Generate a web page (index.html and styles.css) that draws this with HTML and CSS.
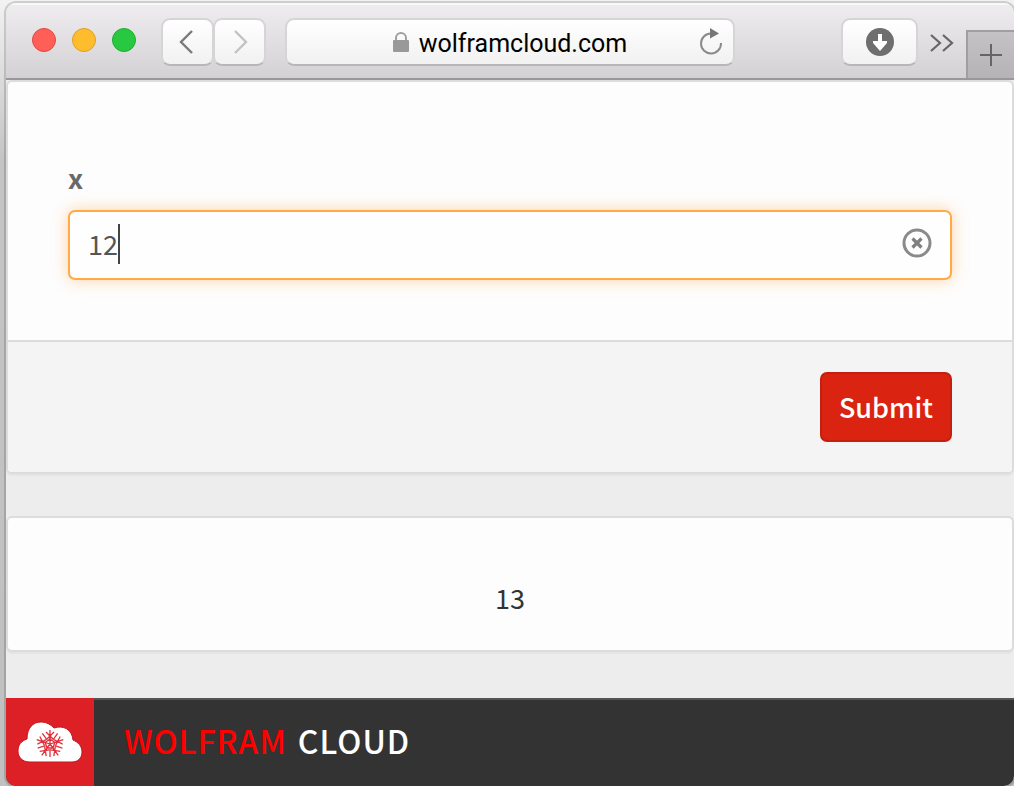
FILE: index.html
```html
<!DOCTYPE html>
<html lang="en">
  <head>
    <meta charset="UTF-8" />
    <meta name="viewport" content="width=device-width, initial-scale=1.0" />
    <title>wolframcloud.com</title>
    <link rel="stylesheet" href="styles.css">
  </head>
  <body>
    <div class="window">
      <!-- Browser toolbar -->
      <header class="toolbar">
        <div class="lights">
          <span class="light red"></span>
          <span class="light yellow"></span>
          <span class="light green"></span>
        </div>

        <div class="nav">
          <button class="tool" type="button" aria-label="Back">
            <svg width="20" height="28" viewBox="0 0 20 28"><path d="M14 3 3 14l11 11" fill="none" stroke="#7a7a7a" stroke-width="2.4" /></svg>
          </button>
          <button class="tool" type="button" aria-label="Forward">
            <svg width="20" height="28" viewBox="0 0 20 28"><path d="M5 3l11 11L5 25" fill="none" stroke="#c2c2c2" stroke-width="2.4" /></svg>
          </button>
        </div>

        <div class="address">
          <svg class="lock" width="16" height="22" viewBox="0 0 16 22">
            <path d="M3 10V7a5 5 0 0 1 10 0v3" fill="none" stroke="#a0a0a0" stroke-width="2" />
            <rect x="0" y="9" width="16" height="12" rx="1" fill="#999" />
          </svg>
          <span class="host">wolframcloud.com</span>
          <button class="reload" type="button" aria-label="Reload">
            <svg width="24" height="28" viewBox="0 0 24 28">
              <path d="M12 5.500A10 10 0 1 0 22 15" fill="none" stroke="#8a8a8a" stroke-width="2" />
              <path d="M11 0l9 5.500-9 5z" fill="#777" />
            </svg>
          </button>
        </div>

        <button class="tool download" type="button" aria-label="Downloads">
          <svg width="28" height="28" viewBox="0 0 28 28">
            <circle cx="14" cy="14" r="14" fill="#6e6e6e" />
            <path d="M12 6h4v7h5v2l-7 8-7-8v-2h5z" fill="#fff" />
          </svg>
        </button>
        <button class="more" type="button" aria-label="More">
          <svg width="24" height="20" viewBox="0 0 24 20"><path d="M1 2l9 8-9 8M13 2l9 8-9 8" fill="none" stroke="#666" stroke-width="2.200" /></svg>
        </button>
        <button class="new-tab" type="button" aria-label="New tab">
          <svg width="22" height="22" viewBox="0 0 22 22"><path d="M11 0v22M0 11h22" stroke="#656565" stroke-width="2" /></svg>
        </button>
      </header>

      <main>
        <!-- Input form -->
        <form class="card">
          <div class="fields">
            <label for="x">x</label>
            <div class="field">
              <input id="x" type="text" value="12" />
              <span class="caret"></span>
              <button class="clear" type="button" aria-label="Clear">
                <svg width="30" height="30" viewBox="0 0 30 30">
                  <circle cx="15" cy="15" r="13" fill="none" stroke="#8a8a8a" stroke-width="3" />
                  <path d="M10.500 10.500l9 9M19.500 10.500l-9 9" stroke="#808080" stroke-width="3.200" />
                </svg>
              </button>
            </div>
          </div>
          <div class="actions">
            <button class="submit" type="submit">Submit</button>
          </div>
        </form>

        <!-- Result -->
        <output class="card result" for="x">13</output>
      </main>

      <footer>
        <div class="logo">
          <svg width="66" height="42" viewBox="0 0 66 42">
            <path d="M13 41C5 41 1 36 1 30c0-6 3-10 9-12C10 7 16 1 24 1c6 0 10 3 13 6 9-3 18 1 19 12 5 2 9 6 9 12 0 6-4 10-10 10z" fill="#fff" stroke="#c5161d" stroke-width="1" />
            <g transform="translate(33 23)" fill="none" stroke="#e0303a" stroke-width="1.300">
              <g id="spikes">
                <path id="spike" d="M0-5v-9M-4-12l4 4 4-4M-3-5l3-3 3 3" />
                <use href="#spike" transform="rotate(72)" />
                <use href="#spike" transform="rotate(144)" />
                <use href="#spike" transform="rotate(216)" />
                <use href="#spike" transform="rotate(288)" />
              </g>
              <path d="M0 5v8M0 5l0 8" transform="rotate(0)" />
              <path d="M0 5v8" transform="rotate(72)" />
              <path d="M0 5v8" transform="rotate(144)" />
              <path d="M0 5v8" transform="rotate(216)" />
              <path d="M0 5v8" transform="rotate(288)" />
              <path d="M0-5l4.800 3.500L3 4h-6l-1.800-5.500zM0 0v-5M0 0l4.800-1.500M0 0l3 4M0 0l-3 4M0 0l-4.800-1.500" />
            </g>
          </svg>
        </div>
        <div class="brand"><span>WOLFRAM</span> CLOUD</div>
      </footer>
    </div>
  </body>
</html>
```
FILE: styles.css
```css
* {
  box-sizing: border-box;
}

body {
  margin: 0;
  padding: 3px 0 0 6px;
  min-height: 100vh;
  display: flex;
  overflow: hidden;
  background: linear-gradient(#f2f2f2, #c4c4c4 160px, #c0c0c0);
  font-family: "Noto Sans CJK SC", "Open Sans", sans-serif;
  font-size: 27px;
  line-height: 40px;
}

button {
  padding: 0;
  border: 0;
  background: none;
  font: inherit;
}

svg {
  display: block;
}

.window {
  flex: 1;
  display: flex;
  flex-direction: column;
  border-radius: 10px;
  overflow: hidden;
  background: #ededed;
  box-shadow: 0 0 0 2px rgba(0, 0, 0, 0.15);
}

/* Browser toolbar */
.toolbar {
  display: flex;
  align-items: flex-start;
  height: 77px;
  padding: 15px 0 0 26px;
  border-bottom: 2px solid #99979a;
  background: linear-gradient(#efedef, #d3d1d3);
  box-shadow: inset 0 2px #f8f8f8;
}

.lights {
  display: flex;
  align-items: center;
  gap: 16px;
  height: 44px;
}

.light {
  width: 24px;
  height: 24px;
  border-radius: 50%;
}

.red {
  background: #ff5f57;
  border: 1px solid #e2463f;
}

.yellow {
  background: #ffbd2e;
  border: 1px solid #dfa023;
}

.green {
  background: #28c940;
  border: 1px solid #1cad2b;
}

.nav {
  display: flex;
  margin-left: 25px;
}

.tool,
.address {
  display: flex;
  align-items: center;
  justify-content: center;
  height: 48px;
  border: 2px solid #d6d4d6;
  border-bottom-color: #b8b6b8;
  border-radius: 9px;
  background: linear-gradient(#fff, #f1f1f1);
}

.nav .tool {
  width: 53px;
}

.nav .tool + .tool {
  margin-left: -1px;
}

.address {
  position: relative;
  flex: 1;
  gap: 10px;
  margin: 0 106px 0 19px;
  font-family: Roboto, sans-serif;
  font-size: 25px;
  color: #000;
}

.host {
  padding-top: 3px;
}

.reload {
  position: absolute;
  right: 10px;
  top: 8px;
}

.download {
  width: 77px;
}

.more {
  display: flex;
  align-items: center;
  height: 50px;
  margin: 0 12px;
}

.new-tab {
  display: flex;
  align-items: center;
  justify-content: center;
  align-self: flex-end;
  width: 48px;
  height: 48px;
  border: 2px solid #a09ea0;
  border-width: 2px 0 0 2px;
  background: linear-gradient(#c4c2c4, #b5b3b5);
}

/* Cards */
main {
  flex: 1;
}

.card {
  display: block;
  border: 2px solid #dcdcdc;
  border-radius: 6px;
  background: #fdfdfd;
  box-shadow: 0 2px #e5e5e5;
  overflow: hidden;
}

.fields {
  padding: 76px 60px 60px;
}

label {
  display: block;
  margin-bottom: 12px;
  font-size: 27px;
  font-weight: bold;
  color: #696969;
}

.field {
  position: relative;
}

.field input {
  display: block;
  width: 100%;
  height: 70px;
  padding: 0 60px 3px 18px;
  border: 2px solid #ffaa45;
  border-radius: 7px;
  outline: 0;
  background: #fefefe;
  box-shadow: 0 0 16px rgba(255, 150, 40, 0.4);
  font: inherit;
  color: #555;
}

.caret {
  position: absolute;
  left: 50px;
  top: 14px;
  width: 2px;
  height: 40px;
  background: #444;
}

.clear {
  position: absolute;
  right: 20px;
  top: 18px;
}

.actions {
  display: flex;
  justify-content: flex-end;
  padding: 30px 60px;
  border-top: 2px solid #dcdcdc;
  background: #f4f4f4;
}

.submit {
  height: 70px;
  padding: 0 17px;
  border: 2px solid #c4200f;
  border-radius: 7px;
  background: #da2310;
  font-weight: 500;
  color: #fff;
}

.result {
  margin-top: 42px;
  padding: 60px 20px 32px;
  text-align: center;
  color: #333;
}

/* Footer */
footer {
  display: flex;
  height: 88px;
  background: #333;
}

.logo {
  display: flex;
  align-items: center;
  justify-content: center;
  width: 88px;
  background: #dd1f26;
}

.brand {
  flex: 1;
  display: flex;
  align-items: center;
  gap: 11px;
  padding: 0 0 6px 30px;
  border-top: 2px solid #555;
  font-size: 32px;
  font-weight: 500;
  letter-spacing: 1px;
  color: #fff;
}

.brand span {
  color: #f00;
}
```
